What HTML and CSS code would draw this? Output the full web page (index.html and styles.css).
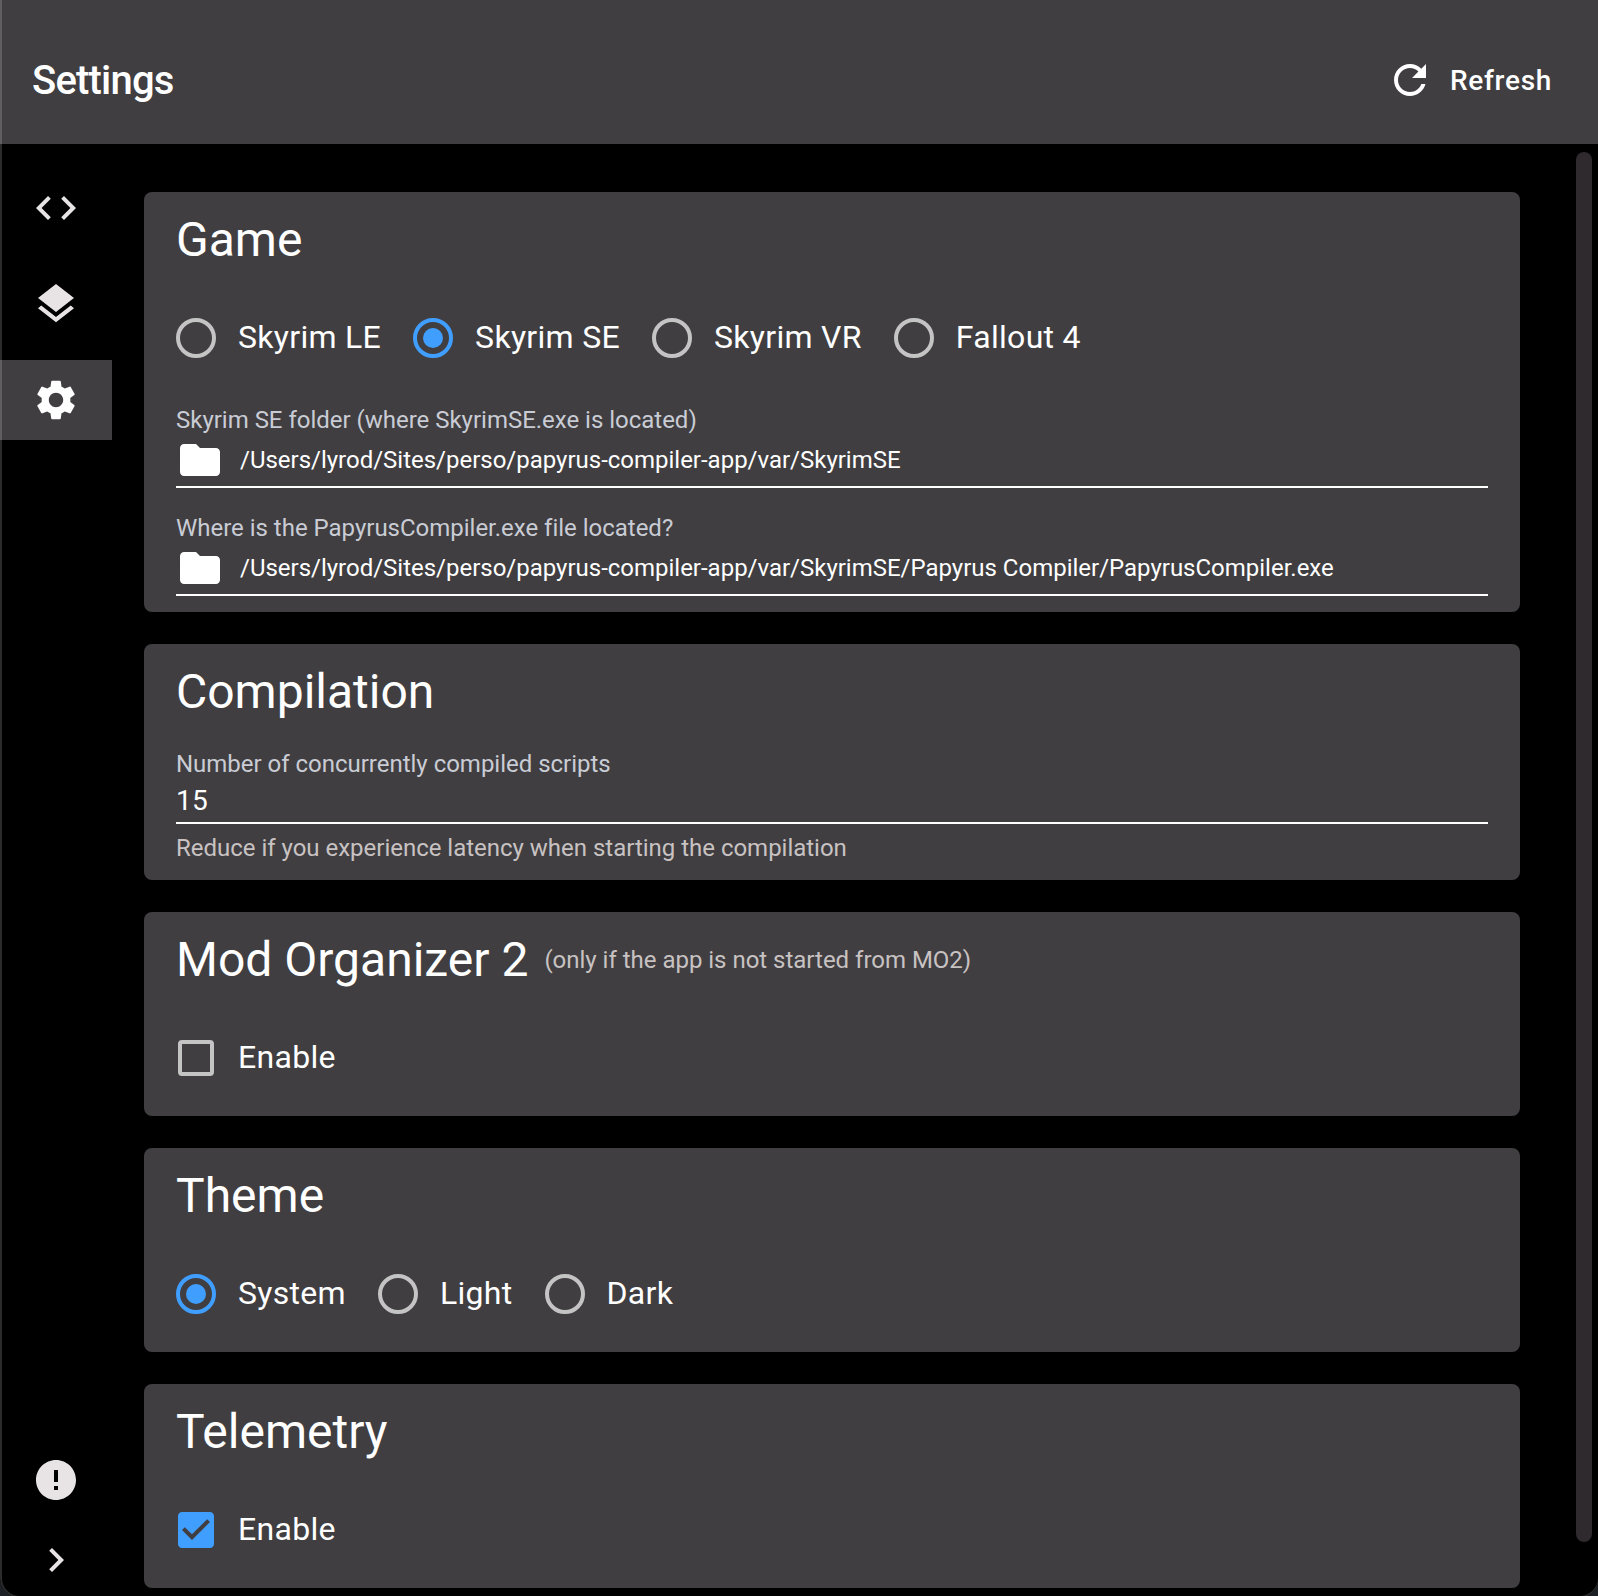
FILE: index.html
```html
<!DOCTYPE html>
<html lang="en">
<head>
<meta charset="utf-8">
<title>Settings</title>
<link rel="stylesheet" href="styles.css">
</head>
<body>
<div class="backdrop">
<div class="window">
  <header class="topbar">
    <h1 class="topbar-title">Settings</h1>
    <button class="refresh" type="button">
      <svg class="icon" viewBox="0 0 24 24"><path d="M17.65 6.35C16.2 4.9 14.21 4 12 4c-4.42 0-7.99 3.58-7.99 8s3.57 8 7.99 8c3.73 0 6.84-2.55 7.73-6h-2.08c-.82 2.33-3.04 4-5.65 4-3.31 0-6-2.69-6-6s2.69-6 6-6c1.66 0 3.14.69 4.22 1.78L13 11h7V4l-2.35 2.35z"/></svg>
      <span class="refresh-text">Refresh</span>
    </button>
  </header>
  <div class="body">
    <nav class="sidebar">
      <a class="nav-item"><svg class="icon" viewBox="0 0 24 24"><path d="M9.4 16.6 4.8 12l4.6-4.6L8 6l-6 6 6 6 1.4-1.4zm5.2 0 4.6-4.6-4.6-4.6L16 6l6 6-6 6-1.4-1.4z"/></svg></a>
      <a class="nav-item"><svg class="icon" viewBox="0 0 24 24"><path d="m11.99 18.54-7.37-5.73L3 14.07l9 7 9-7-1.63-1.27-7.38 5.74zM12 16l7.36-5.73L21 9l-9-7-9 7 1.63 1.27L12 16z"/></svg></a>
      <a class="nav-item selected"><svg class="icon" viewBox="0 0 24 24"><path d="M19.14 12.94c.04-.3.06-.61.06-.94 0-.32-.02-.64-.07-.94l2.03-1.58c.18-.14.23-.41.12-.61l-1.92-3.32c-.12-.22-.37-.29-.59-.22l-2.39.96c-.5-.38-1.03-.7-1.62-.94l-.36-2.54c-.04-.24-.24-.41-.48-.41h-3.84c-.24 0-.43.17-.47.41l-.36 2.54c-.59.24-1.13.57-1.62.94l-2.39-.96c-.22-.08-.47 0-.59.22L2.74 8.87c-.12.21-.08.47.12.61l2.03 1.58c-.05.3-.09.63-.09.94s.02.64.07.94l-2.03 1.58c-.18.14-.23.41-.12.61l1.92 3.32c.12.22.37.29.59.22l2.39-.96c.5.38 1.03.7 1.62.94l.36 2.54c.05.24.24.41.48.41h3.84c.24 0 .44-.17.47-.41l.36-2.54c.59-.24 1.13-.56 1.62-.94l2.39.96c.22.08.47 0 .59-.22l1.92-3.32c.12-.22.07-.47-.12-.61l-2.01-1.58zM12 15.6c-1.98 0-3.6-1.62-3.6-3.6s1.62-3.6 3.6-3.6 3.6 1.62 3.6 3.6-1.62 3.6-3.6 3.6z"/></svg></a>
      <div class="nav-bottom">
        <a class="nav-item"><svg class="icon" viewBox="0 0 24 24"><path d="M12 2C6.48 2 2 6.48 2 12s4.480 10 10 10 10-4.480 10-10S17.520 2 12 2zm1 15h-2v-2h2v2zm0-4h-2V7h2v6z"/></svg></a>
        <a class="nav-item"><svg class="icon" viewBox="0 0 24 24"><path d="M10 6 8.590 7.410 13.170 12l-4.580 4.590L10 18l6-6z"/></svg></a>
      </div>
    </nav>
    <main class="content">
      <section class="card">
        <h2 class="card-title">Game</h2>
        <div class="options">
          <label class="option"><svg class="radio" viewBox="0 0 40 40"><circle cx="20" cy="20" r="18"/></svg><span class="option-text">Skyrim LE</span></label>
          <label class="option"><svg class="radio checked" viewBox="0 0 40 40"><circle cx="20" cy="20" r="18"/><circle class="dot" cx="20" cy="20" r="10"/></svg><span class="option-text">Skyrim SE</span></label>
          <label class="option"><svg class="radio" viewBox="0 0 40 40"><circle cx="20" cy="20" r="18"/></svg><span class="option-text">Skyrim VR</span></label>
          <label class="option"><svg class="radio" viewBox="0 0 40 40"><circle cx="20" cy="20" r="18"/></svg><span class="option-text">Fallout 4</span></label>
        </div>
        <div class="field">
          <div class="field-label">Skyrim SE folder (where SkyrimSE.exe is located)</div>
          <div class="field-input path"><svg class="icon" viewBox="0 0 24 24"><path d="M10 4H4c-1.100 0-1.990.9-1.990 2L2 18c0 1.100.9 2 2 2h16c1.100 0 2-.9 2-2V8c0-1.100-.9-2-2-2h-8l-2-2z"/></svg><span>/Users/lyrod/Sites/perso/papyrus-compiler-app/var/SkyrimSE</span></div>
        </div>
        <div class="field">
          <div class="field-label">Where is the PapyrusCompiler.exe file located?</div>
          <div class="field-input path"><svg class="icon" viewBox="0 0 24 24"><path d="M10 4H4c-1.100 0-1.990.9-1.990 2L2 18c0 1.100.9 2 2 2h16c1.100 0 2-.9 2-2V8c0-1.100-.9-2-2-2h-8l-2-2z"/></svg><span>/Users/lyrod/Sites/perso/papyrus-compiler-app/var/SkyrimSE/Papyrus Compiler/PapyrusCompiler.exe</span></div>
        </div>
      </section>
      <section class="card">
        <h2 class="card-title">Compilation</h2>
        <div class="field">
          <div class="field-label">Number of concurrently compiled scripts</div>
          <div class="field-input number">15</div>
          <div class="helper">Reduce if you experience latency when starting the compilation</div>
        </div>
      </section>
      <section class="card">
        <h2 class="card-title">Mod Organizer 2<span class="hint">(only if the app is not started from MO2)</span></h2>
        <div class="options">
          <label class="option"><span class="checkbox"></span><span class="option-text">Enable</span></label>
        </div>
      </section>
      <section class="card">
        <h2 class="card-title">Theme</h2>
        <div class="options">
          <label class="option"><svg class="radio checked" viewBox="0 0 40 40"><circle cx="20" cy="20" r="18"/><circle class="dot" cx="20" cy="20" r="10"/></svg><span class="option-text">System</span></label>
          <label class="option"><svg class="radio" viewBox="0 0 40 40"><circle cx="20" cy="20" r="18"/></svg><span class="option-text">Light</span></label>
          <label class="option"><svg class="radio" viewBox="0 0 40 40"><circle cx="20" cy="20" r="18"/></svg><span class="option-text">Dark</span></label>
        </div>
      </section>
      <section class="card">
        <h2 class="card-title">Telemetry</h2>
        <div class="options">
          <label class="option"><svg class="icon tick" viewBox="0 0 24 24"><path d="M19 3H5c-1.110 0-2 .9-2 2v14c0 1.100.89 2 2 2h14c1.110 0 2-.9 2-2V5c0-1.100-.89-2-2-2zm-9 14l-5-5 1.410-1.410L10 14.170l7.590-7.590L19 8l-9 9z"/></svg><span class="option-text">Enable</span></label>
        </div>
      </section>
    </main>
    <div class="scrollbar"><div class="thumb"></div></div>
  </div>
</div>
</div>
</body>
</html>
```
FILE: styles.css
```css
* { box-sizing: border-box; }

body {
  margin: 0;
  font-family: Roboto, "Liberation Sans", sans-serif;
  color: #fff;
  background: #1d2126;
}

.backdrop {
  height: 1596px;
  overflow: hidden;
}

.window {
  position: relative;
  display: flex;
  flex-direction: column;
  width: 1599px;
  height: 1598px;
  overflow: hidden;
  background: #000;
  border-radius: 0 0 20px 20px;
}

/* translucent window outline, above everything */
.window::after {
  content: "";
  position: absolute;
  inset: -2px 0 0 0;
  border: 2px solid rgba(255, 255, 255, .17);
  border-right-width: 1px;
  border-radius: 0 0 20px 20px;
  pointer-events: none;
}

.icon {
  flex: none;
  width: 48px;
  height: 48px;
  fill: currentColor;
}

.topbar {
  flex: none;
  display: flex;
  align-items: center;
  justify-content: space-between;
  height: 144px;
  padding: 16px 47px 0 32px;
  background: #403e41;
}

.topbar-title {
  margin: 0;
  padding-top: 2px;
  font-size: 40px;
  font-weight: 500;
  line-height: 48px;
  letter-spacing: -.8px;
}

.refresh {
  display: flex;
  align-items: center;
  gap: 16px;
  padding: 0;
  border: 0;
  background: none;
  color: #fff;
  font: 500 28px/48px Roboto, sans-serif;
  letter-spacing: .7px;
}

.refresh-text { padding-top: 2px; }

.body {
  flex: 1;
  display: flex;
  min-height: 0;
}

.sidebar {
  display: flex;
  flex-direction: column;
  gap: 16px;
  width: 112px;
  padding-top: 24px;
  color: #e8e4e6;
}

.nav-item {
  display: flex;
  align-items: center;
  justify-content: center;
  height: 80px;
}

.selected {
  background: #403e41;
  color: #fff;
}

.nav-bottom {
  margin-top: auto;
  margin-bottom: -2px;
}

.content {
  flex: 1;
  display: flex;
  flex-direction: column;
  gap: 32px;
  padding: 48px 56px 0 32px;
}

.card {
  flex: none;
  padding: 16px 32px;
  border-radius: 8px;
  background: #403e41;
}

.card-title {
  display: flex;
  align-items: center;
  gap: 16px;
  margin: 0 0 24px;
  font-size: 48px;
  font-weight: 400;
  line-height: 64px;
}

.hint {
  font-size: 24px;
  letter-spacing: -.015px;
  color: #c8c2c2;
}

.options {
  display: flex;
  gap: 32px;
  height: 84px;
}

.option {
  display: flex;
  align-items: center;
  font-size: 32px;
  letter-spacing: .3px;
}

.option-text { padding-bottom: 2px; }

.radio {
  flex: none;
  width: 40px;
  height: 40px;
  margin-right: 22px;
  overflow: visible;
  fill: none;
  stroke: #c4c4c4;
  stroke-width: 4px;
}

.radio.checked { stroke: #409eff; }

.radio .dot {
  fill: #409eff;
  stroke: none;
}

.checkbox {
  width: 36px;
  height: 36px;
  margin: 0 24px 0 2px;
  border: 4px solid #c4c4c4;
  border-radius: 4px;
}

.tick {
  margin: 0 18px 0 -4px;
  color: #409eff;
}

.field + .field,
.options + .field { margin-top: 24px; }

.field-label {
  font-size: 24px;
  line-height: 32px;
  letter-spacing: -.015px;
  color: #c9ccd4;
}

.field-input {
  display: flex;
  align-items: center;
  border-bottom: 2px solid #fff;
}

.path {
  gap: 16px;
  height: 52px;
  padding-bottom: 2px;
  font-size: 24px;
  letter-spacing: -.01px;
}

.number {
  height: 44px;
  padding-bottom: 2px;
  font-size: 28px;
  letter-spacing: .3px;
}

.helper {
  margin-top: 8px;
  font-size: 24px;
  line-height: 32px;
  letter-spacing: -.015px;
  color: #c8c2c2;
}

.scrollbar {
  width: 23px;
  padding-top: 8px;
}

.thumb {
  width: 16px;
  height: 1390px;
  border-radius: 8px;
  background: #2f2a2d;
}
```
